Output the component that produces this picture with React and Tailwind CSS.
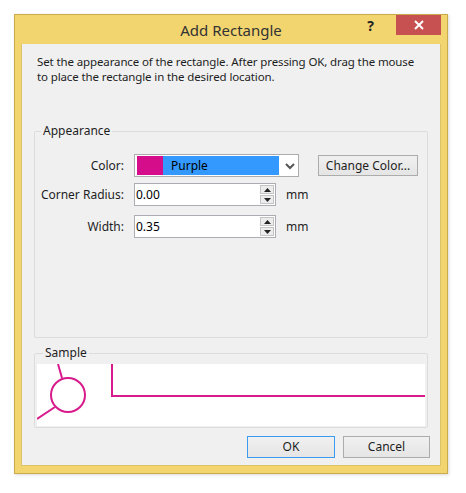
import React from "react";

const font = { fontFamily: '"Noto Sans", "Open Sans", sans-serif' };

const Spin = () => (
  <div className="flex flex-col gap-[1px] w-[14px] h-[19px] mr-[1px]">
    <div className="flex-1 flex items-center justify-center border border-[#c4c4c4] bg-[#ececec]">
      <svg width="7" height="4" viewBox="0 0 7 4">
        <path d="M0 4 L3.5 0 L7 4 Z" fill="#222" />
      </svg>
    </div>
    <div className="flex-1 flex items-center justify-center border border-[#c4c4c4] bg-[#ececec]">
      <svg width="7" height="4" viewBox="0 0 7 4">
        <path d="M0 0 L3.5 4 L7 0 Z" fill="#222" />
      </svg>
    </div>
  </div>
);

const NumField = ({ label, value, mt }) => (
  <div className={`flex items-center ${mt}`}>
    <div className="w-[89px] text-right text-[12px] text-[#1e1e1e]">{label}</div>
    <div className="ml-[10px] w-[142px] h-[23px] border border-[#abadb3] bg-white flex items-center">
      <span className="flex-1 pl-[1px] text-[12px] text-black">{value}</span>
      <Spin />
    </div>
    <span className="ml-[10px] text-[12px] text-[#1e1e1e]">mm</span>
  </div>
);

export default function App() {
  return (
    <div className="w-[466px] h-[493px] bg-white pt-[14px] pl-[14px]" style={font}>
      <div className="w-[434px] h-[460px] border border-[#c9ab4c] bg-[#f2d56f] flex flex-col shadow-[1px_1px_3px_rgba(0,0,0,0.15)]">
        {/* title bar */}
        <div className="h-[29px] flex items-start relative">
          <div className="flex-1 text-center text-[15px] text-[#333] leading-[29px] pt-[1px]">
            Add Rectangle
          </div>
          <div className="absolute right-[6px] top-0 flex items-start">
            <span className="text-[14px] font-bold text-[#222] mr-[22px] leading-[20px] mt-[1px]">?</span>
            <div className="w-[45px] h-[20px] bg-[#c75050] flex items-center justify-center">
              <svg width="10" height="10" viewBox="0 0 10 10">
                <path d="M1 1 L9 9 M9 1 L1 9" stroke="white" strokeWidth="2" />
              </svg>
            </div>
          </div>
        </div>

        {/* client */}
        <div className="flex-1 mx-[6px] mb-[7px] bg-[#f0f0f0] border border-[#dcc36a] border-t-0 flex flex-col px-[12px]">
          <p className="pt-[10px] pl-[3px] text-[11.5px] leading-[15px] text-[#1e1e1e] whitespace-nowrap tracking-[-0.12px]">
            Set the appearance of the rectangle. After pressing OK, drag the mouse
            <br />
            to place the rectangle in the desired location.
          </p>

          <fieldset className="mt-[40px] w-[394px] h-[214px] border border-[#dcdcdc] rounded-[2px]">
            <legend className="ml-[6px] px-[2px] text-[12px] text-[#1e1e1e] leading-[14px]">Appearance</legend>
            <div className="flex items-center mt-[16px]">
              <div className="w-[89px] text-right text-[12px] text-[#1e1e1e]">Color:</div>
              <div className="ml-[10px] w-[165px] h-[23px] border border-[#acacac] bg-white flex items-center px-[2px]">
                <div className="w-[142px] h-[19px] bg-[#3399ff] flex items-center">
                  <div className="w-[26px] h-[19px] bg-[#d50d8b]" />
                  <span className="ml-[8px] text-[12px] text-black">Purple</span>
                </div>
                <svg className="ml-[6px]" width="10" height="8" viewBox="0 0 10 8">
                  <path d="M1 2 L5 6 L9 2" stroke="#555" strokeWidth="2" fill="none" />
                </svg>
              </div>
              <button className="ml-[19px] w-[100px] h-[21px] border border-[#acacac] bg-gradient-to-b from-[#f0f0f0] to-[#e5e5e5] text-[12px] text-[#1e1e1e]">
                Change Color...
              </button>
            </div>
            <NumField label="Corner Radius:" value="0.00" mt="mt-[6px]" />
            <NumField label="Width:" value="0.35" mt="mt-[9px]" />
          </fieldset>

          <fieldset className="mt-[8px] w-[394px] h-[82px] border border-[#dcdcdc] rounded-[2px] px-[2px] pb-[1px]">
            <legend className="ml-[6px] px-[2px] text-[12px] text-[#1e1e1e] leading-[14px]">Sample</legend>
            <div className="bg-white h-[62px] w-[388px] mt-[4px]">
              <svg width="388" height="62" viewBox="0 0 388 62">
                <g stroke="#d81b8c" strokeWidth="2" fill="none">
                  <circle cx="31" cy="31" r="17" />
                  <path d="M21 0 L25 14" />
                  <path d="M0 55 L18 43" />
                  <path d="M75 0 L75 32 L388 32" />
                </g>
              </svg>
            </div>
          </fieldset>

          <div className="flex justify-end gap-[8px] mt-[8px] mr-[-2px]">
            <button className="w-[88px] h-[22px] border border-[#3c9bf0] bg-gradient-to-b from-[#f0f0f0] to-[#e5e5e5] text-[12px] text-[#1e1e1e]">
              OK
            </button>
            <button className="w-[87px] h-[22px] border border-[#acacac] bg-gradient-to-b from-[#f0f0f0] to-[#e5e5e5] text-[12px] text-[#1e1e1e]">
              Cancel
            </button>
          </div>
        </div>
      </div>
    </div>
  );
}
